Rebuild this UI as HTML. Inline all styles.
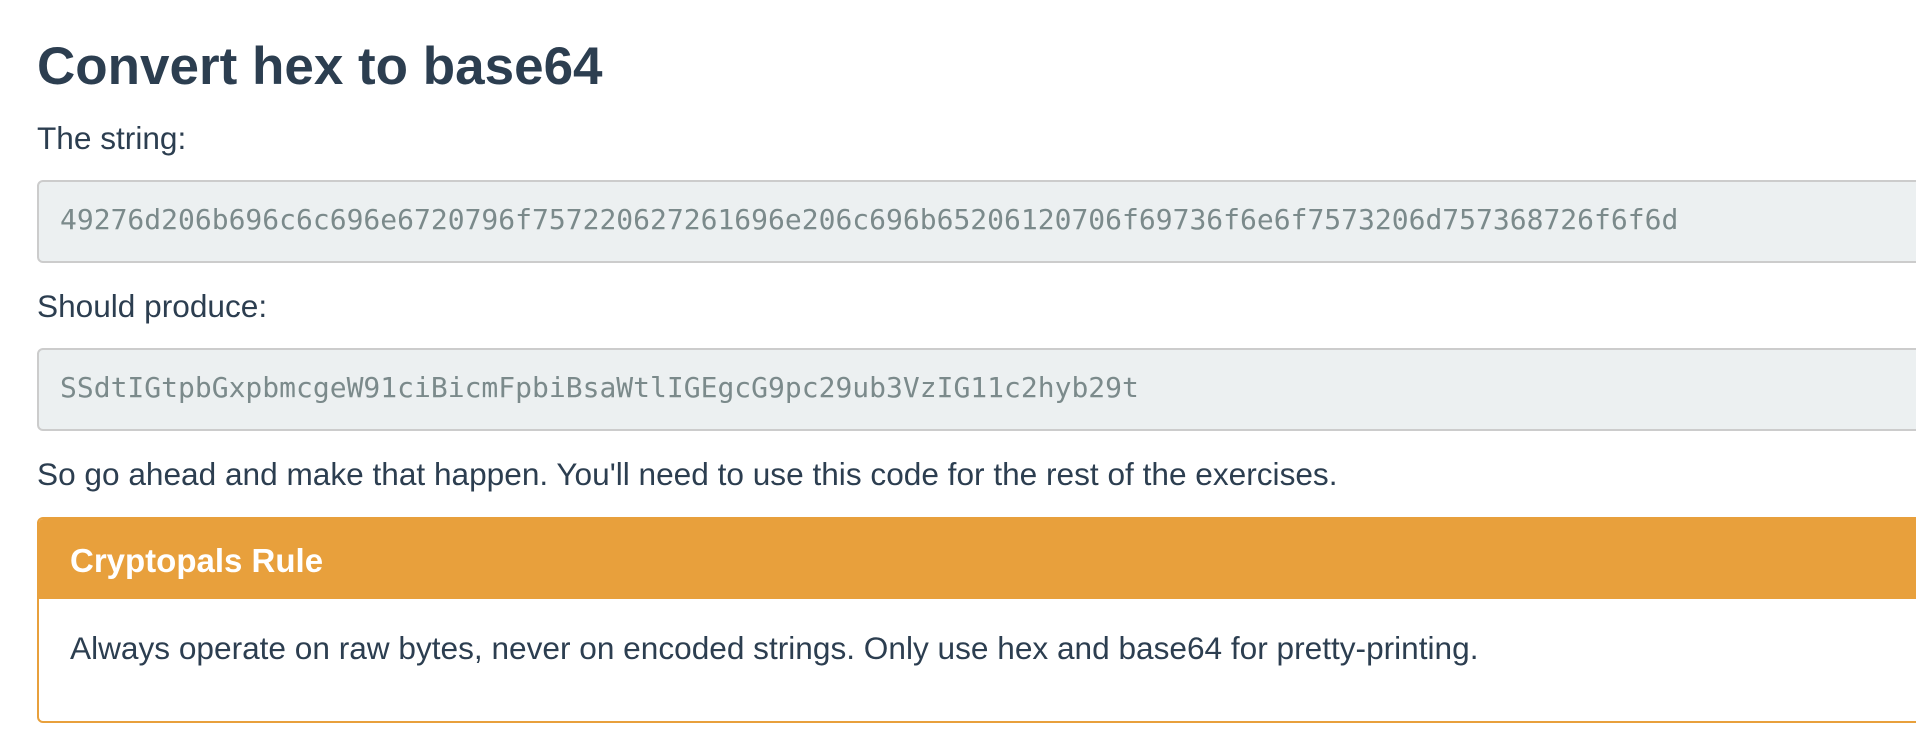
<!DOCTYPE html>
<html><head><meta charset="utf-8"><style>
html,body{margin:0;padding:0;background:#fff;width:1916px;height:754px;overflow:hidden}
body{font-family:"Liberation Sans",Helvetica,Arial,sans-serif;color:#2c3e50;font-size:31.6px;position:relative}
.a{position:absolute;white-space:nowrap;line-height:1}
h1{position:absolute;left:37px;top:40px;margin:0;font-size:53px;font-weight:bold;line-height:1;white-space:nowrap}
.pre{position:absolute;left:37px;width:1900px;background:#ecf0f1;border:2px solid #cccccc;border-radius:6px;box-sizing:border-box}
.pre span{position:absolute;left:21px;font-family:"DejaVu Sans Mono","Liberation Mono",monospace;font-size:28px;color:#7b8a8b;line-height:1}
.panel{position:absolute;left:37px;top:517px;width:1900px;height:206px;border:2px solid #e8a03c;border-radius:6px;box-sizing:border-box;overflow:hidden}
.ph{position:absolute;left:0;top:0;right:0;height:80px;background:#e8a03c}
</style></head><body>
<h1>Convert hex to base64</h1>
<div class="a" style="left:37px;top:123px">The string:</div>
<div class="pre" style="top:180px;height:83px"><span style="top:24px">49276d206b696c6c696e6720796f757220627261696e206c696b65206120706f69736f6e6f7573206d757368726f6f6d</span></div>
<div class="a" style="left:37px;top:291px">Should produce:</div>
<div class="pre" style="top:348px;height:83px"><span style="top:24px">SSdtIGtpbGxpbmcgeW91ciBicmFpbiBsaWtlIGEgcG9pc29ub3VzIG11c2hyb29t</span></div>
<div class="a" style="left:37px;top:459px">So go ahead and make that happen. You'll need to use this code for the rest of the exercises.</div>
<div class="panel"><div class="ph"></div>
<div class="a" style="left:31px;top:25px;color:#fff;font-weight:bold;font-size:33px">Cryptopals Rule</div>
<div class="a" style="left:31px;top:114px">Always operate on raw bytes, never on encoded strings. Only use hex and base64 for pretty-printing.</div>
</div>
</body></html>
